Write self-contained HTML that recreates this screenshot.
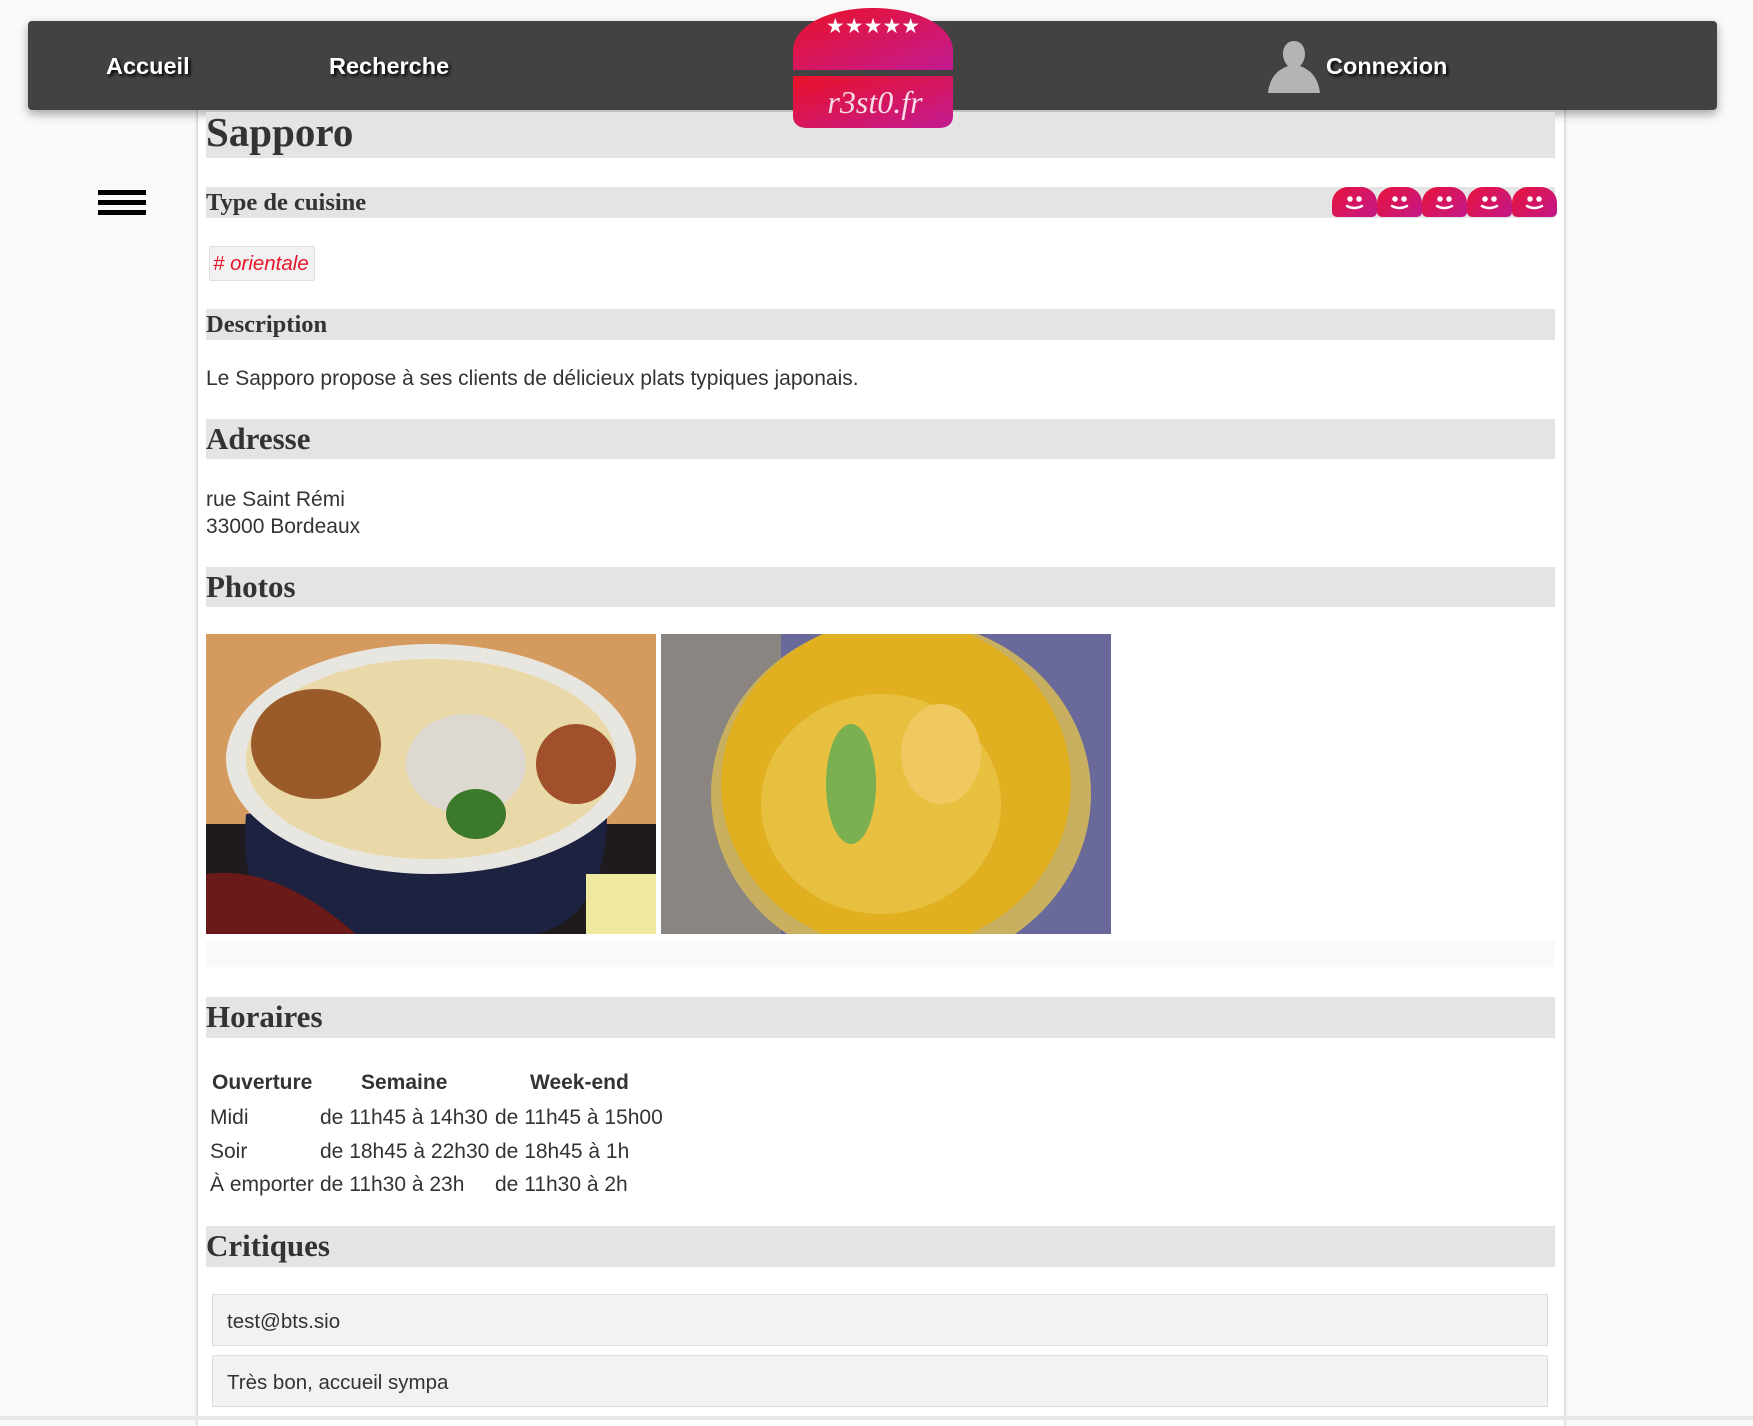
<!DOCTYPE html>
<html><head><meta charset="utf-8"><style>
*{margin:0;padding:0;box-sizing:border-box}
body{width:1753px;height:1420px;background:#fafafa;position:relative;overflow:hidden;font-family:"Liberation Sans",sans-serif;color:#333}
.a{position:absolute}
.panel{left:198px;top:76px;width:1366px;height:1350px;background:#fff;box-shadow:0 0 4px rgba(0,0,0,.3)}
.band{position:absolute;left:206px;width:1349px;background:#e4e4e4;font-family:"Liberation Serif",serif;font-weight:bold;color:#333;padding-left:0}
.nav{left:28px;top:21px;width:1689px;height:89px;background:#424242;border-radius:4px;box-shadow:0 4px 10px rgba(0,0,0,.35)}
.nl{position:absolute;color:#fff;font-weight:bold;font-size:23.5px;text-shadow:2px 2px 3px #000}
.t{position:absolute;font-size:21px;color:#333}
.sm{position:absolute;top:187px;width:45px;height:30px;border-radius:16px 16px 5px 5px;background:linear-gradient(135deg,#e8123a,#c2188a)}
.box{position:absolute;left:212px;width:1336px;height:52px;background:#f2f2f2;border:1px solid #ddd;font-size:20.5px;padding:15px 0 0 14px}
</style></head><body>
<div class="a panel"></div>
<div class="a nav"></div>
<div class="nl" style="left:106px;top:53px">Accueil</div>
<div class="nl" style="left:329px;top:53px">Recherche</div>
<svg class="a" style="left:1266px;top:40px" width="56" height="54"><path d="M28 1c7 0 11 6 11 13 0 6-3 10-5 12 8 3 18 9 20 27H2C4 35 14 29 22 26c-2-2-5-6-5-12C17 7 21 1 28 1z" fill="#b4b4b4"/></svg>
<div class="nl" style="left:1326px;top:53px">Connexion</div>
<div class="band" style="top:112px;height:46px;font-size:41px;line-height:40px">Sapporo</div>
<svg class="a" style="left:792px;top:6px;z-index:5" width="162" height="124">
<defs><linearGradient id="g" x1="0" y1="0" x2="1" y2="1"><stop offset="0" stop-color="#ea1228"/><stop offset="1" stop-color="#c21a92"/></linearGradient></defs>
<path d="M1 64V45C1 18 40 2 81 2s80 16 80 43v19z" fill="url(#g)"/>
<path d="M1 70h160v40c0 8-6 12-14 12H15C7 122 1 118 1 110z" fill="url(#g)"/>
<text x="81" y="27" text-anchor="middle" fill="#fff" font-size="21" font-family="DejaVu Sans">★★★★★</text>
<text x="83" y="107" text-anchor="middle" fill="#f4dbe6" font-size="32" font-style="italic" font-family="Liberation Serif">r3st0.fr</text>
</svg>
<div class="a" style="left:98px;top:190px;width:48px;height:5px;background:#000"></div>
<div class="a" style="left:98px;top:200px;width:48px;height:5px;background:#000"></div>
<div class="a" style="left:98px;top:210px;width:48px;height:5px;background:#000"></div>
<div class="band" style="top:187px;height:31px;font-size:24.5px;line-height:31px">Type de cuisine</div>
<div class="sm" style="left:1332px"></div><div class="sm" style="left:1377px"></div><div class="sm" style="left:1422px"></div><div class="sm" style="left:1467px"></div><div class="sm" style="left:1512px"></div>
<svg class="a" style="left:1332px;top:187px" width="225" height="30" fill="none" stroke="#fff" stroke-width="2.5" stroke-linecap="round">
<g id="f"><circle cx="18" cy="12" r="1.5" fill="#fff"/><circle cx="27" cy="12" r="1.5" fill="#fff"/><path d="M15 19q7 4 15 0"/></g>
<use href="#f" x="45"/><use href="#f" x="90"/><use href="#f" x="135"/><use href="#f" x="180"/>
</svg>
<div class="a" style="left:209px;top:246px;width:106px;height:35px;background:#f2f2f2;border:1px solid #e0e0e0;border-radius:2px;color:#e8162b;font-style:italic;font-size:20.5px;padding:5px 0 0 3px">#&nbsp;orientale</div>
<div class="band" style="top:309px;height:31px;font-size:24.5px;line-height:31px">Description</div>
<div class="t" style="left:206px;top:367px">Le Sapporo propose à ses clients de délicieux plats typiques japonais.</div>
<div class="band" style="top:419px;height:40px;font-size:31px;line-height:40px">Adresse</div>
<div class="t" style="left:206px;top:486px;line-height:27px">rue Saint Rémi<br>33000 Bordeaux</div>
<div class="band" style="top:567px;height:40px;font-size:31px;line-height:40px">Photos</div>
<svg class="a" style="left:206px;top:634px" width="450" height="300">
<rect width="450" height="300" fill="#d49a5e"/><rect x="0" y="190" width="450" height="110" fill="#1f1a1e"/>
<path d="M40 180 Q30 300 120 300 L330 300 Q410 280 400 150z" fill="#1c2240"/>
<ellipse cx="225" cy="125" rx="205" ry="115" fill="#e8e6e0"/>
<ellipse cx="225" cy="125" rx="185" ry="100" fill="#e9d8a8"/>
<ellipse cx="110" cy="110" rx="65" ry="55" fill="#9a5a2a"/>
<ellipse cx="370" cy="130" rx="40" ry="40" fill="#a0502a"/>
<ellipse cx="260" cy="130" rx="60" ry="50" fill="#ddd8d0"/>
<ellipse cx="270" cy="180" rx="30" ry="25" fill="#3a7a2a"/>
<rect x="380" y="240" width="70" height="60" fill="#eee8a0"/>
<path d="M0 240Q70 230 150 300H0z" fill="#6a1a18"/>
</svg>
<svg class="a" style="left:661px;top:634px" width="450" height="300">
<rect width="450" height="300" fill="#6a6a9a"/><rect width="120" height="300" fill="#8a8580"/>
<ellipse cx="240" cy="160" rx="190" ry="175" fill="#c8b060"/>
<ellipse cx="235" cy="150" rx="175" ry="165" fill="#e0b020"/>
<ellipse cx="220" cy="170" rx="120" ry="110" fill="#e8c040"/>
<ellipse cx="190" cy="150" rx="25" ry="60" fill="#7ab050"/>
<ellipse cx="280" cy="120" rx="40" ry="50" fill="#f0c860"/>
</svg>
<div class="a" style="left:206px;top:941px;width:1349px;height:26px;background:#f9f9f9"></div>
<div class="band" style="top:997px;height:41px;font-size:31px;line-height:40px">Horaires</div>
<div class="t" style="left:212px;top:1071px;font-weight:bold">Ouverture</div>
<div class="t" style="left:361px;top:1071px;font-weight:bold">Semaine</div>
<div class="t" style="left:530px;top:1071px;font-weight:bold">Week-end</div>
<div class="t" style="left:210px;top:1101px;line-height:33.5px">Midi<br>Soir<br>À emporter</div>
<div class="t" style="left:320px;top:1101px;line-height:33.5px">de 11h45 à 14h30<br>de 18h45 à 22h30<br>de 11h30 à 23h</div>
<div class="t" style="left:495px;top:1101px;line-height:33.5px">de 11h45 à 15h00<br>de 18h45 à 1h<br>de 11h30 à 2h</div>
<div class="band" style="top:1226px;height:41px;font-size:31px;line-height:40px">Critiques</div>
<div class="box" style="top:1294px">test@bts.sio</div>
<div class="box" style="top:1355px">Très bon, accueil sympa</div>
<div class="a" style="left:0;top:1416px;width:1753px;height:4px;background:#e8e8e8"></div>
</body></html>
